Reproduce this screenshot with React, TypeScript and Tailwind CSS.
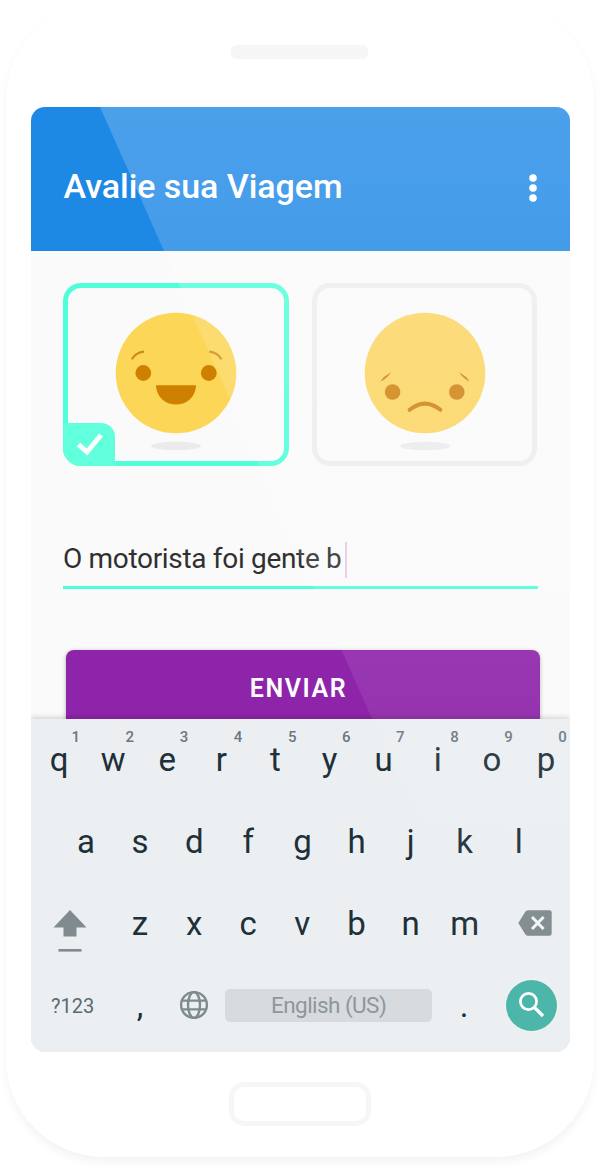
import type { ReactNode } from "react";

const TOP_ROW = ["q", "w", "e", "r", "t", "y", "u", "i", "o", "p"];
const HOME_ROW = ["a", "s", "d", "f", "g", "h", "j", "k", "l"];
const BOTTOM_ROW = ["z", "x", "c", "v", "b", "n", "m"];

function Key({ label, hint }: { label: string; hint?: string }) {
  return (
    <div className="relative flex h-full w-[54.1px] shrink-0 items-center justify-center pb-[1px] text-[33px] leading-none text-[#203038]">
      {label}
      {hint && (
        <span className="absolute top-[11px] left-[39.5px] text-[15px] leading-none font-medium text-[#6b777c]">
          {hint}
        </span>
      )}
    </div>
  );
}

function HappyFace() {
  return (
    <svg className="h-[138px] w-[122px]" viewBox="0 0 122 138">
      <ellipse cx="61" cy="134" rx="25" ry="4.3" fill="#ebebeb" />
      <circle cx="61" cy="61" r="60.3" fill="#fcd656" />
      <g fill="#d08000">
        <circle cx="28.3" cy="61" r="7.9" />
        <circle cx="93.8" cy="61" r="7.9" />
        <path d="M41 73.3H81C80.6 85 72 92.6 61 92.6S41.4 85 41 73.3Z" />
      </g>
      <g fill="none" stroke="#d08a15" strokeWidth="2.2">
        <path d="M16.8 47.3C19.5 42.6 23.5 40 29 39.6" />
        <path d="M94.3 39.6C99.8 40 103.8 42.6 106.5 47.3" />
      </g>
    </svg>
  );
}

function SadFace() {
  return (
    <svg className="ml-[1px] h-[138px] w-[122px]" viewBox="0 0 122 138">
      <ellipse cx="61.3" cy="134" rx="25" ry="4.3" fill="#ebebeb" />
      <circle cx="61" cy="61" r="60.3" fill="#fbd563" />
      <g fill="#cf8212">
        <circle cx="28.6" cy="80" r="7.8" />
        <circle cx="92.8" cy="80" r="7.8" />
        <path d="M16.5 69.5Q23 66.5 27 60.5Q19.5 64 16.5 69.5Z" />
        <path d="M95.3 60.5Q99 66.5 105.5 69.5Q102.5 64 95.3 60.5Z" />
      </g>
      <path d="M45.6 97.8Q61 85.5 76.4 97.8" fill="none" stroke="#cf8212" strokeWidth="4" strokeLinecap="round" />
    </svg>
  );
}

function Card({ selected, children }: { selected?: boolean; children: ReactNode }) {
  return (
    <div
      className={
        selected
          ? "relative flex h-[183.5px] w-[226px] justify-center rounded-[18px] border-[5px] border-[#50ffda] pt-[24.5px]"
          : "relative flex h-[183.5px] w-[226px] justify-center rounded-[18px] border-[5px] border-[#ededed] pt-[24.5px]"
      }
    >
      {children}
      {selected && (
        <div className="absolute -bottom-[5px] -left-[5px] flex h-[43px] w-[52px] items-center justify-center rounded-tr-[14px] rounded-bl-[18px] bg-[#62ffdc]">
          <svg className="mb-[2px] ml-[2px] h-[24px] w-[28px]" viewBox="0 0 28 24">
            <path d="M2.5 12.5L11 20L25 3" fill="none" stroke="#fcffff" strokeWidth="5" />
          </svg>
        </div>
      )}
    </div>
  );
}

function Keyboard() {
  return (
    <div className="relative flex h-[333px] shrink-0 flex-col bg-[#ebeff2] font-[Roboto,sans-serif] shadow-[0_-1px_6px_rgba(0,0,0,0.2)]">
      <div className="flex h-[82px] pl-[1.5px]">
        {TOP_ROW.map((k, i) => (
          <Key key={k} label={k} hint={String((i + 1) % 10)} />
        ))}
      </div>
      <div className="flex h-[82px] pl-[28.5px]">
        {HOME_ROW.map((k) => (
          <Key key={k} label={k} />
        ))}
      </div>
      <div className="flex h-[82px] items-center">
        <div className="flex w-[82.5px] justify-center pt-[14px] pr-[4px]">
          <svg className="h-[44px] w-[34px]" viewBox="0 0 34 44" fill="#7f8b8e">
            <path d="M17 1L33.5 18.5H23.5V27.5H10.5V18.5H.5Z" />
            <rect x="5.5" y="40" width="23" height="2.6" />
          </svg>
        </div>
        {BOTTOM_ROW.map((k) => (
          <Key key={k} label={k} />
        ))}
        <svg className="mb-[2px] ml-[26px] h-[26px] w-[34px]" viewBox="0 0 34 26">
          <path d="M10 0.3H31.5Q33.7 .3 33.7 2.5V23.5Q33.7 25.7 31.5 25.7H10Q8.3 25.7 7.3 24.2L.3 13L7.3 1.8Q8.3 .3 10 .3Z" fill="#7f8b8e" />
          <path d="M14 7L25.6 19M25.6 7L14 19" stroke="#f1f4f6" strokeWidth="3" />
        </svg>
      </div>
      <div className="flex h-[82px] items-center">
        <div className="w-[82.5px] pl-[20.5px] text-[20px] leading-none text-[#5b6a70]">?123</div>
        <Key label="," />
        <svg className="mb-[2px] h-[28px] w-[54px]" viewBox="0 0 54 28" fill="none" stroke="#7f8b8e" strokeWidth="2.4">
          <circle cx="27" cy="14" r="12.9" />
          <ellipse cx="27" cy="14" rx="6" ry="12.9" />
          <path d="M15 9.6H39M15 18.4H39" />
        </svg>
        <div className="mb-[1px] ml-[4px] flex h-[33px] w-[207px] items-center justify-center rounded-[5px] bg-[#d7dbde] text-[22.5px] leading-none tracking-[-0.55px] text-[#8e979b]">
          English (US)
        </div>
        <div className="ml-[5px]">
          <Key label="." />
        </div>
        <div className="mb-[1px] ml-[14.5px] flex size-[51px] items-center justify-center rounded-full bg-[#4db6ab] shadow-[0_0_0_1px_#f5f1f1]">
          <svg className="mb-[2px] size-[27px]" viewBox="0 0 27 27" fill="none" stroke="#fff" strokeWidth="2.7">
            <circle cx="10.5" cy="10.5" r="8.1" />
            <path d="M16.4 16.4L25 25" strokeWidth="3.3" />
          </svg>
        </div>
      </div>
    </div>
  );
}

export default function App() {
  return (
    <div className="flex h-[1171px] w-[600px] justify-center overflow-hidden bg-white font-[Roboto,sans-serif]">
      <div className="flex h-[1157px] w-[588px] flex-col items-center rounded-t-[100px] rounded-b-[98px] bg-white shadow-[0_5px_10px_rgba(0,0,0,0.05)]">
        <div className="mt-[44.5px] mr-[1px] h-[14px] w-[137px] shrink-0 rounded-[6px] bg-[#f6f6f6]" />

        <div className="relative mt-[48.5px] flex h-[945px] w-[539px] shrink-0 flex-col overflow-hidden rounded-[14px] bg-[#fafafa]">
          <header className="flex h-[144px] shrink-0 items-center justify-between bg-[#1e88e5] pt-[15px] pr-[33px] pl-[33px]">
            <h1 className="mb-[2px] text-[34px] leading-none font-medium tracking-[-0.05px] whitespace-nowrap text-white">
              Avalie sua Viagem
            </h1>
            <svg className="mt-[3px] h-[28px] w-[8px]" viewBox="0 0 8 28" fill="#fff">
              <circle cx="4" cy="4" r="3.8" />
              <circle cx="4" cy="14" r="3.8" />
              <circle cx="4" cy="24" r="3.8" />
            </svg>
          </header>

          <main className="flex h-[468px] shrink-0 flex-col overflow-hidden px-[32.5px] pt-[31.5px]">
            <div className="flex shrink-0 gap-[23px]">
              <Card selected>
                <HappyFace />
              </Card>
              <Card>
                <SadFace />
              </Card>
            </div>
            <div className="mt-[76px] flex h-[47px] w-[475px] shrink-0 items-start border-b-[3px] border-[#50ffda]">
              <span className="pt-[2px] text-[28px] leading-[30px] tracking-[-0.32px] whitespace-nowrap text-[#303030]">
                O motorista foi gente b
              </span>
              <span className="ml-[4px] h-[36px] w-[2px] bg-[#e3cdea]" />
            </div>
            <button className="mt-[60.5px] ml-[3px] h-[80px] w-[474px] shrink-0 rounded-[8px] bg-[#8e24aa] pr-[9px] pb-[2px] text-[25px] leading-none font-semibold tracking-[1.6px] text-white shadow-[0_1px_4px_rgba(0,0,0,0.3)]">
              ENVIAR
            </button>
          </main>

          <Keyboard />

          <svg className="pointer-events-none absolute inset-0 h-[945px] w-[539px]" viewBox="0 0 539 945">
            <defs>
              <linearGradient id="glare" gradientUnits="userSpaceOnUse" x1="0" y1="0" x2="0" y2="870">
                <stop offset="0" stopColor="#fff" stopOpacity="0.2" />
                <stop offset="1" stopColor="#fff" stopOpacity="0.02" />
              </linearGradient>
            </defs>
            <path d="M69 0H539V868H455Z" fill="url(#glare)" />
          </svg>
        </div>

        <div className="mt-[30px] h-[44px] w-[142px] shrink-0 rounded-[15px] border-[5.5px] border-[#f6f6f6]" />
      </div>
    </div>
  );
}
